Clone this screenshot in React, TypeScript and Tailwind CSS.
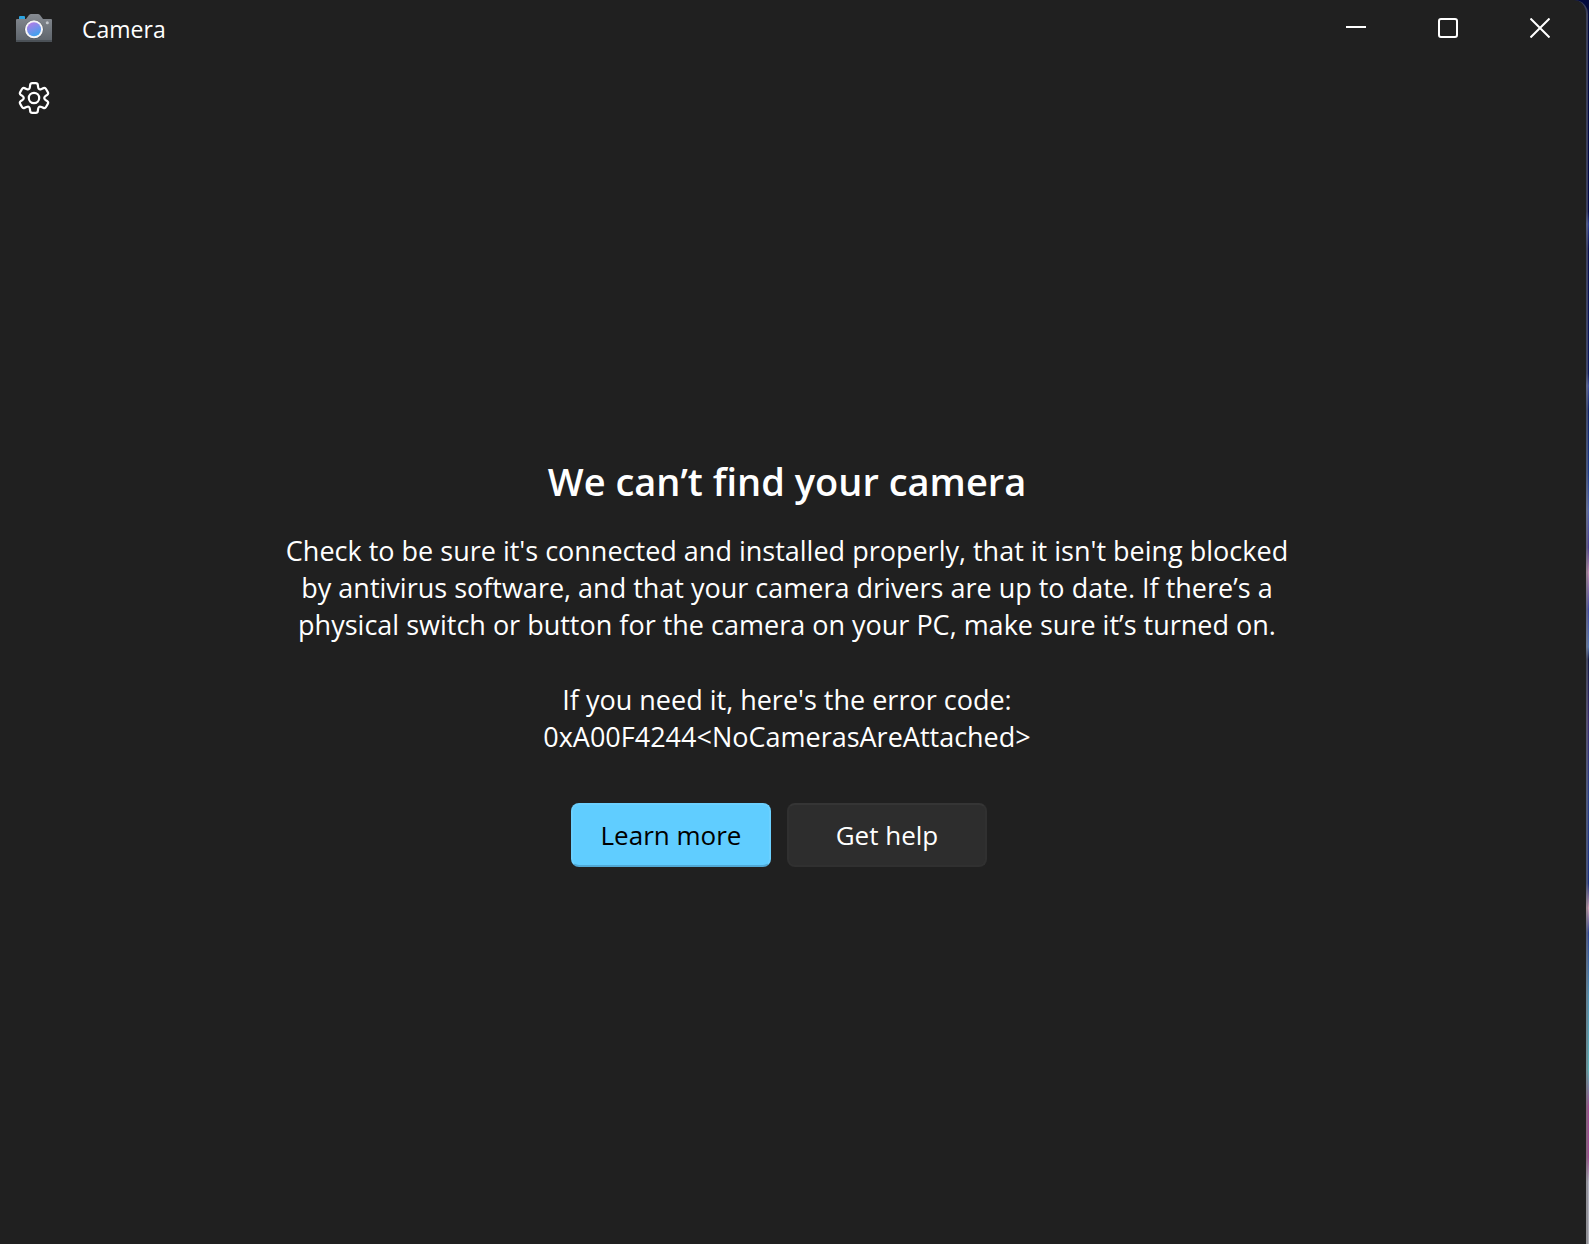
import type { ButtonHTMLAttributes } from 'react';
import clsx from 'clsx';

type Point = [number, number];

function rotate([x, y]: Point, deg: number): Point {
  const a = (deg * Math.PI) / 180;
  return [x * Math.cos(a) - y * Math.sin(a), x * Math.sin(a) + y * Math.cos(a)];
}

// Six-tooth gear outline with rounded corners, centred on 0,0
function gearPath() {
  const pts: Point[] = [];
  for (let i = 0; i < 6; i++) {
    const tooth: Point[] = [[-4.3, -9.3], [-3.6, -14.9], [3.6, -14.9], [4.3, -9.3]];
    tooth.forEach((p) => pts.push(rotate(p, i * 60)));
  }

  const towards = (from: Point, to: Point, dist: number): Point => {
    const len = Math.hypot(to[0] - from[0], to[1] - from[1]);
    const t = Math.min(dist / len, 0.5);
    return [from[0] + (to[0] - from[0]) * t, from[1] + (to[1] - from[1]) * t];
  };

  const parts = pts.map((p, i) => {
    const a = towards(p, pts[(i + pts.length - 1) % pts.length], 1.8);
    const b = towards(p, pts[(i + 1) % pts.length], 1.8);
    return `${i === 0 ? 'M' : 'L'}${a[0]} ${a[1]}Q${p[0]} ${p[1]} ${b[0]} ${b[1]}`;
  });
  return parts.join('') + 'Z';
}

function GearIcon() {
  return (
    <svg viewBox="-17 -17 34 34" className="size-[34px]" fill="none" stroke="currentColor" strokeWidth="2.2">
      <path d={gearPath()} strokeLinejoin="round" />
      <circle r="5.2" />
    </svg>
  );
}

function CameraLogo() {
  return (
    <svg viewBox="0 0 36 28" className="h-7 w-9" aria-hidden="true">
      <defs>
        <linearGradient id="body" x1="0" y1="0" x2="0" y2="1">
          <stop offset="0" stopColor="#868b92" />
          <stop offset="1" stopColor="#5c636a" />
        </linearGradient>
        <linearGradient id="lens" x1="0.2" y1="0" x2="0.7" y2="1">
          <stop offset="0" stopColor="#b57be6" />
          <stop offset="1" stopColor="#38a5f0" />
        </linearGradient>
      </defs>
      <rect x="3" y="2" width="6" height="4" rx="1" fill="#2ba3e0" />
      <path d="M1 5H10L13 1Q14 0 15 0H22Q23 0 24 1L27 5H35Q36 5 36 6V27Q36 28 35 28H1Q0 28 0 27V6Q0 5 1 5Z" fill="url(#body)" />
      <path d="M0 26H36V27Q36 28 35 28H1Q0 28 0 27Z" fill="#4b5157" />
      <circle cx="18" cy="15.5" r="9.4" fill="#50565d" />
      <circle cx="18" cy="15.3" r="9" fill="#f4f4f6" />
      <circle cx="18" cy="15.3" r="7" fill="url(#lens)" />
      <circle cx="31.3" cy="8.7" r="1.5" fill="#c3c7cc" />
    </svg>
  );
}

function CaptionButton({ className, ...props }: ButtonHTMLAttributes<HTMLButtonElement>) {
  return (
    <button
      type="button"
      className={clsx('flex h-14 w-[92px] items-center justify-center hover:bg-white/10', className)}
      {...props}
    />
  );
}

function TitleBar() {
  return (
    <header className="flex h-14 items-center">
      <div className="flex flex-1 items-center gap-[30px] pl-4">
        <CameraLogo />
        <h1 className="pt-0.5 text-[23px] leading-8">Camera</h1>
      </div>
      <CaptionButton aria-label="Minimize">
        <svg viewBox="0 0 20 20" className="size-5" stroke="currentColor" strokeWidth="2">
          <path d="M0 9H20" />
        </svg>
      </CaptionButton>
      <CaptionButton aria-label="Maximize">
        <svg viewBox="0 0 20 20" className="size-5" fill="none" stroke="currentColor" strokeWidth="2">
          <rect x="1" y="1" width="18" height="18" rx="2" />
        </svg>
      </CaptionButton>
      <CaptionButton aria-label="Close">
        <svg viewBox="0 0 20 20" className="size-5" stroke="currentColor" strokeWidth="2">
          <path d="M0.5 0.5L19.5 19.5M19.5 0.5L0.5 19.5" />
        </svg>
      </CaptionButton>
    </header>
  );
}

export default function App() {
  return (
    <div className="min-h-screen bg-[linear-gradient(to_bottom,#020a3c_0%,#020a48_17%,#2c3f94_18%,#08104f_20%,#0c1a5e_30%,#4052a0_31%,#0f2368_33%,#1d3b8a_38%,#5468b0_41%,#4a3f90_44%,#c08cb4_46%,#3f48a0_49%,#5878b4_52%,#141c48_53%,#3a2f70_58%,#2a4088_64%,#1c3280_71%,#d0a0b8_73%,#2c4494_75%,#5090b4_80%,#60b0b8_86%,#a04c90_89%,#a04c90_93%,#b4b4c4_95%,#b0b0b8_100%)] pr-px font-['Open_Sans','Noto_Sans',sans-serif] text-white">
      <div className="flex min-h-screen flex-col rounded-tr-[14px] border-r-2 border-[#757575]/50 bg-[#202020] bg-clip-padding">
        <TitleBar />

        <div className="px-[17px] pt-[25px] pb-6">
          <button type="button" aria-label="Settings" className="block">
            <GearIcon />
          </button>
        </div>

        <main className="flex flex-1 flex-col items-center justify-center pr-3 pb-[61px] text-center">
          <h2 className="text-[38px] leading-[52px] font-semibold">We can’t find your camera</h2>
          <div className="mt-[25px] max-w-[1010px] text-[27px] leading-[37px]">
            <p>
              Check to be sure it's connected and installed properly, that it isn't being blocked by antivirus
              software, and that your camera drivers are up to date. If there’s a physical switch or button for the
              camera on your PC, make sure it’s turned on.
            </p>
            <p className="mt-[38px]">
              If you need it, here's the error code:
              <br />
              0xA00F4244&lt;NoCamerasAreAttached&gt;
            </p>
          </div>
          <div className="mt-12 flex text-[26px]">
            <button
              type="button"
              className="mr-4 h-16 w-[200px] rounded-lg border-2 border-[#6bd0ff] border-b-[#51a9d6] bg-[#60cdff] text-black"
            >
              Learn more
            </button>
            <button
              type="button"
              className="mr-4 h-16 w-[200px] rounded-lg border-2 border-[#303030] border-t-[#353535] bg-[#2d2d2d]"
            >
              Get help
            </button>
          </div>
        </main>
      </div>
    </div>
  );
}
